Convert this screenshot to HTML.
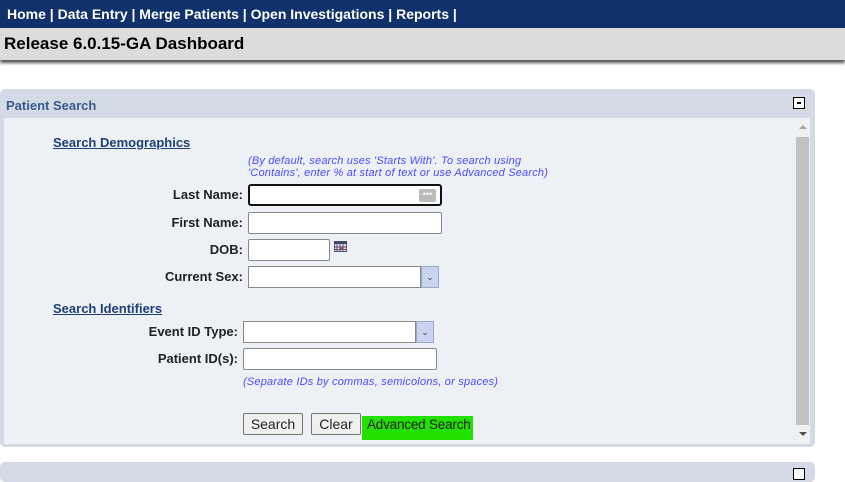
<!DOCTYPE html>
<html><head><style>
*{box-sizing:border-box;margin:0;padding:0}
body{width:845px;height:471px;overflow:hidden;background:#fff;font-family:"Liberation Sans",Arial,sans-serif;position:relative}
.nav{position:absolute;left:0;top:0;width:845px;height:28px;background:#10316b;color:#fff;font-weight:bold;font-size:14px;line-height:28px;padding-left:7px;white-space:pre}
.title{position:absolute;left:0;top:28px;width:845px;height:32px;background:#dcdcdc;font-weight:bold;font-size:17px;line-height:31px;padding-left:4px;box-shadow:0 3px 3px #555}
.panel{position:absolute;left:0;width:815px;background:#d3dae5;border-radius:5px}
.ph{position:absolute;left:6px;top:9px;color:#3a5a8c;font-weight:bold;font-size:13px}
.content{position:absolute;left:4px;top:29px;width:806px;height:326px;background:#edf0f5}
.a{position:absolute;font-size:13px;white-space:nowrap}
.sec{color:#1f3f78;font-weight:bold;text-decoration:underline}
.lbl{font-weight:bold;color:#222;text-align:right;width:200px}
.inp{position:absolute;background:#fff;border:1px solid #888;border-radius:2px}
.hint{position:absolute;font-style:italic;color:#4b4bff;font-size:11px;line-height:12px;white-space:nowrap;letter-spacing:0.2px}
.dd{position:absolute;width:18px;height:22px;background:#c8d4ee;border:1px solid #9aa8c8;color:#445;font-size:9px;text-align:center;line-height:20px}
.btn{position:absolute;height:22px;background:#efefef;border:1px solid #777;border-radius:2px;font-size:14px;text-align:center;line-height:20px;color:#222}
</style></head><body>
<div class="nav">Home | Data Entry | Merge Patients | Open Investigations | Reports |</div>
<div class="title">Release 6.0.15-GA Dashboard</div>
<div class="panel" style="top:89px;height:358px">
 <div class="ph">Patient Search</div>
 <div style="position:absolute;left:793px;top:8px;width:12px;height:12px;border:1px solid #000;background:#fff"><div style="position:absolute;left:3px;top:4px;width:4px;height:2px;background:#000"></div></div>
 <div class="content">
  <div style="position:absolute;left:791px;top:0;width:15px;height:326px;background:#f0f0f0"></div>
  <div style="position:absolute;left:792px;top:19px;width:13px;height:288px;background:#c1c1c1"></div>
  <div style="position:absolute;left:795px;top:7px;width:0;height:0;border-left:4px solid transparent;border-right:4px solid transparent;border-bottom:4px solid #a3a3a3"></div>
  <div style="position:absolute;left:795px;top:314px;width:0;height:0;border-left:4px solid transparent;border-right:4px solid transparent;border-top:4px solid #505050"></div>
 </div>
</div>
<div class="a sec" style="left:53px;top:135px">Search Demographics</div>
<div class="hint" style="left:248px;top:155px">(By default, search uses 'Starts With'. To search using<br>'Contains', enter % at start of text or use Advanced Search)</div>
<div class="a lbl" style="left:43px;top:187px">Last Name:</div>
<div class="inp" style="left:248px;top:184px;width:194px;height:22px;border:2px solid #111;border-radius:3px"><div style="position:absolute;right:4px;top:3px;width:17px;height:13px;background:#bbb;border-radius:2px;color:#fff;font-size:9px;line-height:10px;text-align:center">•••</div></div>
<div class="a lbl" style="left:43px;top:215px">First Name:</div>
<div class="inp" style="left:248px;top:212px;width:194px;height:22px"></div>
<div class="a lbl" style="left:43px;top:242px">DOB:</div>
<div class="inp" style="left:248px;top:239px;width:82px;height:22px"></div>
<svg style="position:absolute;left:334px;top:241px" width="13" height="11"><rect x="0.5" y="0.5" width="12" height="10" fill="#dde" stroke="#557"/><rect x="0" y="0" width="13" height="3" fill="#446"/><path d="M3 3v8M6 3v8M9 3v8M0 6h13M0 8.5h13" stroke="#557" stroke-width="1"/><rect x="6" y="6" width="3" height="2" fill="#c33"/></svg>
<div class="a lbl" style="left:43px;top:269px">Current Sex:</div>
<div class="inp" style="left:248px;top:266px;width:173px;height:22px;border-radius:0"></div>
<div class="dd" style="left:421px;top:266px">&#8964;</div>
<div class="a sec" style="left:53px;top:301px">Search Identifiers</div>
<div class="a lbl" style="left:38px;top:324px">Event ID Type:</div>
<div class="inp" style="left:243px;top:321px;width:173px;height:22px;border-radius:0"></div>
<div class="dd" style="left:416px;top:321px">&#8964;</div>
<div class="a lbl" style="left:38px;top:351px">Patient ID(s):</div>
<div class="inp" style="left:243px;top:348px;width:194px;height:22px"></div>
<div class="hint" style="left:243px;top:376px">(Separate IDs by commas, semicolons, or spaces)</div>
<div class="btn" style="left:243px;top:413px;width:60px">Search</div>
<div class="btn" style="left:311px;top:413px;width:50px">Clear</div>
<div style="position:absolute;left:362px;top:416px;width:111px;height:24px;background:#22e000;font-size:13.5px;line-height:18px;padding-left:5px;color:#222;white-space:nowrap;letter-spacing:-0.2px">Advanced Search</div>
<div class="panel" style="top:462px;height:20px"><div style="position:absolute;left:793px;top:6px;width:12px;height:12px;border:1px solid #000;background:#fff"></div></div>
</body></html>
